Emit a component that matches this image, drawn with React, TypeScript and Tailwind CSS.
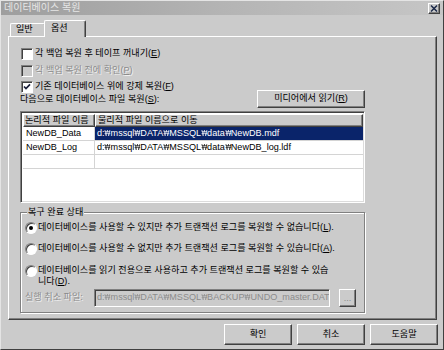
import React from 'react';

const raised =
  'border border-t-white border-l-white border-r-[#404040] border-b-[#404040] shadow-[inset_-1px_-1px_0_#808080]';
const sunken =
  'border border-t-[#808080] border-l-[#808080] border-r-white border-b-white shadow-[inset_1px_1px_0_#404040]';

const Key = ({ k }: { k: string }) => (
  <>
    (<span className="underline underline-offset-[1px]">{k}</span>)
  </>
);

// the Korean font shows "\" as a won sign; keep it narrow like the bitmap font
const Path = ({ text }: { text: string }) => (
  <>
    {text.split('₩').map((part, i) => (
      <React.Fragment key={i}>
        {i > 0 && (
          <span className="inline-flex w-[6px] justify-center">
            <span className="inline-block scale-x-[0.68]">₩</span>
          </span>
        )}
        {part}
      </React.Fragment>
    ))}
  </>
);

const Check = ({ checked, disabled }: { checked?: boolean; disabled?: boolean }) => (
  <span
    className={`w-[12px] h-[12px] shrink-0 flex items-center justify-center ${sunken} ${
      disabled ? 'bg-[#cbcbcb]' : 'bg-white'
    }`}
  >
    {checked && (
      <svg width="8" height="8" viewBox="0 0 8 8">
        <path d="M1 3.5 L3 5.6 L7 1.4" stroke="#1a1f3a" strokeWidth="1.7" fill="none" />
      </svg>
    )}
  </span>
);

const Radio = ({ on }: { on?: boolean }) => (
  <span
    className={`w-[12px] h-[12px] shrink-0 rounded-full bg-white flex items-center justify-center ${sunken}`}
  >
    {on && <span className="w-[4px] h-[4px] rounded-full bg-black" />}
  </span>
);

const Button = ({ children, className = '' }: { children: React.ReactNode; className?: string }) => (
  <div className={`flex items-center justify-center bg-[#cbcbcb] leading-none whitespace-nowrap ${raised} ${className}`}>
    {children}
  </div>
);

export default function App() {
  return (
    <div className="w-[444px] h-[350px] bg-[#cbcbcb] flex flex-col border border-t-[#e4e4e4] border-l-[#e4e4e4] border-r-[#404040] border-b-[#404040] text-[9.1px] text-black font-['Liberation_Sans','Noto_Sans_CJK_KR',sans-serif] overflow-hidden whitespace-nowrap">
      {/* title bar */}
      <div className="h-[14px] flex items-end justify-between pl-[3px] pr-[3px] pb-[1px] bg-gradient-to-r from-[#9e9e9e] via-[#b4b4b4] to-[#c6c6c6]">
        <span className="self-center text-[10px] leading-none text-[#e6e6e6]">데이터베이스 복원</span>
        <div className={`w-[12px] h-[11px] flex items-center justify-center bg-[#cbcbcb] ${raised}`}>
          <svg width="8" height="7" viewBox="0 0 8 7">
            <path d="M1 0.5 L7 6.5 M7 0.5 L1 6.5" stroke="#1c2a4a" strokeWidth="1.5" />
          </svg>
        </div>
      </div>

      {/* tabs */}
      <div className="mt-[5px] ml-[9px] flex items-end h-[17px] relative z-10 -mb-[1px]">
        <div className="w-[35px] h-[13px] mb-[1px] flex items-center pl-[5px] border-t border-l border-r border-t-white border-l-white border-r-[#404040] rounded-tl-[2px] rounded-tr-[2px] leading-none">
          일반
        </div>
        <div className="w-[42px] h-[17px] -ml-[1px] flex items-center pl-[6px] bg-[#cbcbcb] border-t border-l border-r border-t-white border-l-white border-r-[#404040] shadow-[inset_-1px_0_0_#808080] rounded-tl-[2px] rounded-tr-[2px] leading-none">
          옵션
        </div>
      </div>

      {/* tab panel */}
      <div className="ml-[7px] w-[429px] h-[284px] border border-t-white border-l-white border-r-[#404040] border-b-[#404040] shadow-[inset_-1px_-1px_0_#808080] pl-[11px] pt-[11px] flex flex-col">
        <div className="flex items-center gap-[2px] h-[12px] ml-[1px] leading-none">
          <Check />
          <span>
            각 백업 복원 후 테이프 꺼내기<Key k="E" />
          </span>
        </div>
        <div className="flex items-center gap-[2px] h-[12px] ml-[1px] mt-[5px] leading-none">
          <Check disabled />
          <span className="text-[#8c8c8c] [text-shadow:1px_1px_0_#f0f0f0]">
            각 백업 복원 전에 확인<Key k="P" />
          </span>
        </div>
        <div className="flex items-center gap-[2px] h-[12px] ml-[1px] mt-[4px] leading-none">
          <Check checked />
          <span>
            기존 데이터베이스 위에 강제 복원<Key k="F" />
          </span>
        </div>

        <div className="w-[345px] h-[18px] -mt-[3px] flex items-center justify-between leading-none">
          <span className="mt-[2px]">
            다음으로 데이터베이스 파일 복원<Key k="S" />:
          </span>
          <Button className="w-[108px] h-[18px]">
            미디어에서 읽기<Key k="R" />
          </Button>
        </div>

        {/* file list */}
        <div className="mt-[3px] w-[345px] h-[92px] bg-white border border-t-[#808080] border-l-[#808080] border-r-white border-b-white shadow-[inset_1px_1px_0_#404040,inset_-1px_-1px_0_#dcdcdc] p-[1px] pl-[2px] pt-[2px] flex flex-col leading-none">
          <div className="flex h-[13px]">
            <div className={`w-[72px] flex items-center pl-[1px] bg-[#cbcbcb] ${raised}`}>논리적 파일 이름</div>
            <div className={`flex-1 flex items-center pl-[2px] bg-[#cbcbcb] ${raised}`}>물리적 파일 이름으로 이동</div>
          </div>
          {[
            { n: 'NewDB_Data', p: 'd:₩mssql₩DATA₩MSSQL₩data₩NewDB.mdf', sel: true },
            { n: 'NewDB_Log', p: 'd:₩mssql₩DATA₩MSSQL₩data₩NewDB_log.ldf', sel: false },
            { n: '', p: '', sel: false },
          ].map((r, i) => (
            <div key={i} className="flex h-[14px] border-b border-b-[#d4d4d4]">
              <div className="w-[72px] flex items-center pl-[3px] border-r border-r-[#d4d4d4]">{r.n}</div>
              <div className={`flex-1 flex items-center pl-[2px] ${r.sel ? 'bg-[#0a246a] text-white' : ''}`}>
                <Path text={r.p} />
              </div>
            </div>
          ))}
        </div>

        {/* recovery state group */}
        <div className="mt-[9px] w-[345px] h-[101px] relative border border-[#808080] shadow-[inset_1px_1px_0_white,1px_1px_0_white] pl-[4px] pt-[9px] flex flex-col leading-none">
          <span className="absolute left-[6px] -top-[6px] px-[1px] bg-[#cbcbcb] leading-[11px]">복구 완료 상태</span>
          <div className="flex items-center gap-[1px] h-[12px]">
            <Radio on />
            <span>
              데이터베이스를 사용할 수 있지만 추가 트랜잭션 로그를 복원할 수 없습니다<Key k="L" />.
            </span>
          </div>
          <div className="flex items-center gap-[1px] h-[12px] mt-[9px]">
            <Radio />
            <span>
              데이터베이스를 사용할 수 없지만 추가 트랜잭션 로그를 복원할 수 있습니다<Key k="A" />.
            </span>
          </div>
          <div className="flex items-start gap-[1px] mt-[10px]">
            <Radio />
            <div className="flex flex-col leading-[11px]">
              <span>데이터베이스를 읽기 전용으로 사용하고 추가 트랜잭션 로그를 복원할 수 있습</span>
              <span>
                니다<Key k="D" />.
              </span>
            </div>
          </div>
          <div className="flex items-center h-[18px] mt-[2px]">
            <span className="w-[69px] text-[#8c8c8c] [text-shadow:1px_1px_0_#f0f0f0]">실행 취소 파일:</span>
            <div className={`w-[236px] h-[18px] flex items-center pl-[2px] overflow-hidden bg-[#cbcbcb] text-[#8c8c8c] ${sunken} shadow-[inset_1px_1px_0_#404040,inset_-1px_-1px_0_#dcdcdc]`}>
              <Path text="d:₩mssql₩DATA₩MSSQL₩BACKUP₩UNDO_master.DAT" />
            </div>
            <Button className="ml-[9px] w-[17px] h-[18px] items-end pb-[3px] text-[#8c8c8c]">...</Button>
          </div>
        </div>
      </div>

      {/* dialog buttons */}
      <div className="mt-[4px] pr-[5px] flex justify-end gap-[5px]">
        <Button className="w-[68px] h-[21px]">확인</Button>
        <Button className="w-[68px] h-[21px]">취소</Button>
        <Button className="w-[68px] h-[21px]">도움말</Button>
      </div>
    </div>
  );
}
